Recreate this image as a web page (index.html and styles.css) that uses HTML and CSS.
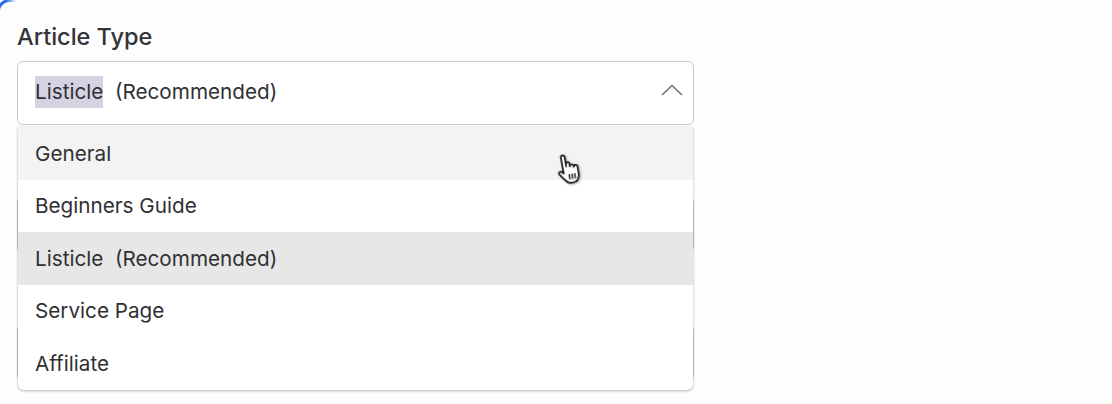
FILE: index.html
```html
<!DOCTYPE html>
<html>
<head>
<meta charset="utf-8">
<link rel="stylesheet" href="styles.css">
</head>
<body>
<div class="page">
  <div class="corner"></div>
  <form class="form">
    <div class="field">
      <label class="label">Article Type</label>
      <div class="select-wrap">
        <div class="select">
          <span class="value"><span class="sel">Listicle</span>&nbsp; (Recommended)</span>
          <svg class="chev" width="22" height="12" viewBox="0 0 22 12"><path d="M1 11 L11 1.5 L21 11" fill="none" stroke="#707070" stroke-width="1.5"/></svg>
        </div>
        <ul class="menu">
          <li class="item hover">General</li>
          <li class="item">Beginners Guide</li>
          <li class="item active">Listicle&nbsp; (Recommended)</li>
          <li class="item">Service Page</li>
          <li class="item">Affiliate</li>
        </ul>
        <svg class="cursor" width="30" height="37" viewBox="0 0 26 32">
          <path d="M7 17 V4.5 a1.6 1.6 0 0 1 3.2 0 V13 V11 a1.6 1.6 0 0 1 3.2 0 V13.5 a1.6 1.6 0 0 1 3.2 0 V14.5 a1.6 1.6 0 0 1 3.2 0 V21 c0 3.5-2.2 6.5-5.5 6.5 H12 c-2 0-3.2-1-4.3-2.6 L3.4 19 a1.5 1.5 0 0 1 2.3-2 L7 18.6 Z" fill="#fff" stroke="#111" stroke-width="1.4" stroke-linejoin="round"/>
          <path d="M11.6 20 V24.5 M14 20 V24.5 M16.4 20 V24.5" stroke="#111" stroke-width="1.2"/>
        </svg>
      </div>
    </div>
    <div class="field">
      <div class="label-space"></div>
      <div class="input"></div>
    </div>
    <div class="field">
      <div class="label-space"></div>
      <div class="input"></div>
    </div>
  </form>
</div>
</body>
</html>
```

FILE: styles.css
```css
html, body {
  margin: 0;
  padding: 0;
  background: #fdfdfd;
}
body {
  font-family: Inter, "Noto Sans", sans-serif;
  color: #303034;
  overflow: hidden;
  height: 404px;
}
.page {
  position: relative;
  padding: 22px 17px 0 17px;
}
.corner {
  position: absolute;
  left: -3px;
  top: -1px;
  width: 16px;
  height: 10px;
  border-top-left-radius: 12px;
  border-top: 3px solid #2f6fe8;
  border-left: 3px solid #2f6fe8;
  -webkit-mask-image: linear-gradient(90deg, #000 50%, transparent 100%);
  mask-image: linear-gradient(90deg, #000 50%, transparent 100%);
}
.form {
  width: 677px;
  display: flex;
  flex-direction: column;
  gap: 32px;
  margin: 0;
}
.field {
  display: flex;
  flex-direction: column;
  gap: 9px;
}
.label {
  font-size: 23.5px;
  font-weight: 500;
  line-height: 30px;
  color: #333338;
}
.label-space {
  height: 30px;
}
.select-wrap {
  position: relative;
}
.select {
  height: 64px;
  box-sizing: border-box;
  border: 1px solid #c9c9c9;
  border-radius: 6px;
  background: #fff;
  display: flex;
  align-items: center;
  justify-content: space-between;
  padding: 0 10px 0 17px;
}
.value {
  font-size: 20.7px;
  line-height: 32px;
  color: #303034;
  margin-top: -2px;
}
.sel {
  background: #d4d3e2;
  display: inline-block;
  line-height: 32px;
}
.chev {
  margin-top: -6px;
}
.input {
  height: 57px;
  box-sizing: border-box;
  border: 1px solid #c9c9c9;
  border-radius: 6px;
  background: #fff;
}
.menu {
  position: absolute;
  top: calc(100% + 2px);
  left: 1px;
  right: 1px;
  margin: 0;
  padding: 0;
  list-style: none;
  background: #fff;
  border-radius: 0 0 6px 6px;
  box-shadow: 0 1px 3px rgba(0,0,0,0.28), 0 0 1px rgba(0,0,0,0.15);
  overflow: hidden;
  z-index: 2;
}
.item {
  height: 52.5px;
  display: flex;
  align-items: center;
  padding-left: 17px;
  font-size: 20.7px;
  color: #303034;
}
.item.hover {
  background: #f3f3f3;
}
.item.active {
  background: #e7e7e7;
}
.cursor {
  position: absolute;
  left: 538px;
  top: 90px;
  z-index: 3;
  transform: rotate(-10deg);
  filter: drop-shadow(1px 1px 1px rgba(0,0,0,0.35));
}
```
